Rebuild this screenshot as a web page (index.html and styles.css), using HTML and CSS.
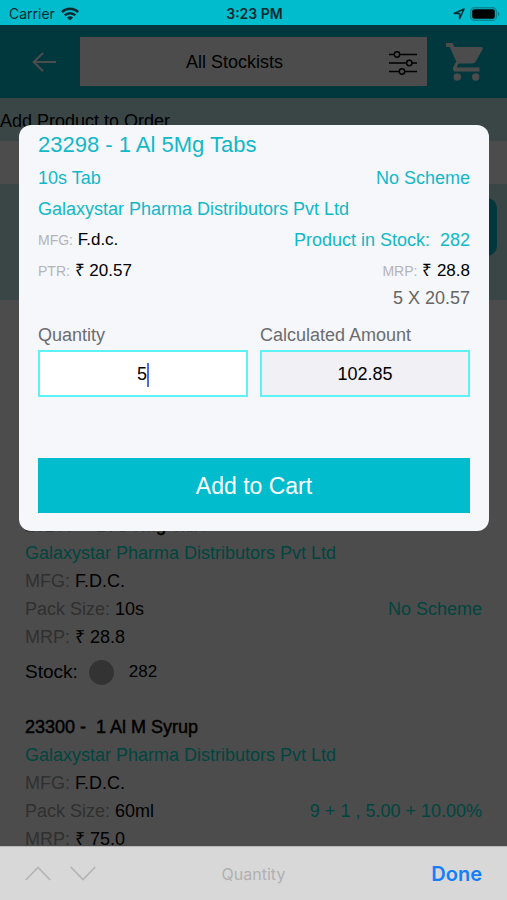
FILE: index.html
```html
<!DOCTYPE html>
<html lang="en">
<head>
<meta charset="utf-8">
<meta name="viewport" content="width=device-width, initial-scale=1">
<title>Add Product to Order</title>
<link rel="stylesheet" href="styles.css">
</head>
<body>
<div class="screen">
  <div class="status">
    <div class="status-left">
      <span>Carrier</span>
      <svg class="wifi" viewBox="0 0 18 14" width="18" height="14" fill="none" stroke="#062b30" stroke-width="2.6"><path d="M.9 5.2a11.400 11.400 0 0 1 16.200 0"/><path d="M3.8 8.400a7.300 7.300 0 0 1 10.400 0"/><path d="M9 13.600 5.900 10.600a4.400 4.400 0 0 1 6.200 0z" fill="#062b30" stroke="none"/></svg>
    </div>
    <span class="time">3:23 PM</span>
    <div class="status-right">
      <svg viewBox="0 0 12 12" width="12" height="12" fill="none" stroke="#062b30" stroke-width="1.5" stroke-linejoin="round"><path d="M11 1 1.200 5.400h5.400v5.400z"/></svg>
      <svg viewBox="0 0 30 14" width="30" height="14"><rect x=".7" y=".7" width="25.600" height="12.600" rx="3.600" fill="none" stroke="#068894" stroke-width="1.400"/><rect x="2.200" y="2.200" width="22.600" height="9.600" rx="2" fill="#000"/><path d="M27.600 4.600q2 .8 2 2.400t-2 2.400z" fill="#068894"/></svg>
    </div>
  </div>

  <main class="app">
    <header class="bar">
      <button class="icon-btn back" aria-label="Back"><svg viewBox="0 0 24 20" width="24" height="20" fill="none" stroke="#fff" stroke-width="2"><path d="M24 10H2M11 1 1.600 10l9.400 9"/></svg></button>
      <button class="picker"><span>All Stockists</span>
        <svg viewBox="0 0 28 24" width="28" height="24" fill="none" stroke="#000" stroke-width="1.500"><path d="M0 3.500h5M11 3.500h17M0 12h17.500M23 12h5M0 20.500h10M16 20.500h12"/><circle cx="8" cy="3.500" r="2.700"/><circle cx="20.300" cy="12" r="2.700"/><circle cx="13" cy="20.500" r="2.700"/></svg>
      </button>
      <button class="icon-btn cart" aria-label="Cart"><svg viewBox="0 0 37 38" width="37" height="38" fill="#fff"><path d="M0 0h6.500l2 4h26.500q2.400 0 1.500 2.400l-6.800 12.200q-1.200 2-3.500 2H12.600l-1.600 3q-.5 1 .6 1H33.500v4H10.500q-4.600 0-3.200-4.600l3-5.600L3.800 4H0z"/><circle cx="11.300" cy="34" r="3.700"/><circle cx="29.700" cy="34" r="3.700"/></svg></button>
    </header>
    <h1 class="strip">Add Product to Order</h1>
    <div class="gap"></div>
    <div class="search"><div class="search-block"></div></div>
    <section class="list">
      <article class="item first">
        <h2>23298 -&nbsp; 1 Al 5Mg Tabs</h2>
        <p class="seller">Galaxystar Pharma Distributors Pvt Ltd</p>
        <p><span class="key">MFG:</span> F.D.C.</p>
        <p class="split"><span><span class="key">Pack Size:</span> 10s</span><span class="offer">No Scheme</span></p>
        <p><span class="key">MRP:</span> ₹ 28.8</p>
        <div class="stock"><span class="stock-label">Stock:</span><span class="dot"></span><span>282</span></div>
      </article>
      <article class="item">
        <h2>23300 -&nbsp; 1 Al M Syrup</h2>
        <p class="seller">Galaxystar Pharma Distributors Pvt Ltd</p>
        <p><span class="key">MFG:</span> F.D.C.</p>
        <p class="split"><span><span class="key">Pack Size:</span> 60ml</span><span class="offer">9 + 1 , 5.00 + 10.00%</span></p>
        <p><span class="key">MRP:</span> ₹ 75.0</p>
      </article>
    </section>

    <div class="overlay">
      <form class="modal" role="dialog" aria-labelledby="product">
        <h2 class="product" id="product">23298 - 1 Al 5Mg Tabs</h2>
        <div class="row accent"><span>10s Tab</span><span>No Scheme</span></div>
        <div class="row accent"><span>Galaxystar Pharma Distributors Pvt Ltd</span></div>
        <div class="row"><span class="value"><span class="tag">MFG:</span> F.d.c.</span><span class="accent">Product in Stock:&nbsp; 282</span></div>
        <div class="row"><span class="value"><span class="tag">PTR:</span> ₹ 20.57</span><span class="value"><span class="tag">MRP:</span> ₹ 28.8</span></div>
        <div class="sum">5 X 20.57</div>
        <div class="fields">
          <div class="field"><label for="qty">Quantity</label>
            <div class="entry"><input id="qty" type="text" inputmode="numeric" value="5" size="1"><span class="caret"></span></div></div>
          <div class="field"><label for="amount">Calculated Amount</label>
            <div class="entry readonly"><input id="amount" type="text" value="102.85" size="6" readonly></div></div>
        </div>
        <button class="submit" type="button">Add to Cart</button>
      </form>
    </div>
  </main>

  <footer class="keys">
    <div class="arrows">
      <button class="icon-btn" aria-label="Previous field"><svg viewBox="0 0 26 15" width="26" height="15" fill="none" stroke="#b4b4b4" stroke-width="1.700"><path d="M.8 14 13 1.500 25.200 14"/></svg></button>
      <button class="icon-btn" aria-label="Next field"><svg viewBox="0 0 26 15" width="26" height="15" fill="none" stroke="#b4b4b4" stroke-width="1.700"><path d="M.8 1 13 13.500 25.200 1"/></svg></button>
    </div>
    <span class="hint">Quantity</span>
    <button class="done">Done</button>
  </footer>
</div>
</body>
</html>
```

FILE: styles.css
```css
* { box-sizing: border-box; }
body {
  margin: 0;
  background: #fff;
  color: #000;
  font-family: "Liberation Sans", Arial, sans-serif;
  font-size: 18px;
}
h1, h2, p { margin: 0; }
button, input { font: inherit; color: inherit; border: 0; padding: 0; margin: 0; background: none; }
svg { display: block; flex: none; }
.screen { height: 100vh; display: flex; flex-direction: column; overflow: hidden; }

.status {
  flex: none;
  height: 25px;
  padding: 2px 7px 0 9px;
  display: grid;
  grid-template-columns: 1fr auto 1fr;
  align-items: center;
  background: #00bccd;
  color: #062b30;
  font-family: Inter, Roboto, sans-serif;
  font-size: 14px;
}
.status-left { display: flex; align-items: center; gap: 6px; }
.status-right { display: flex; align-items: center; justify-content: flex-end; gap: 5px; }
.time { font-weight: 600; }

.app { position: relative; flex: 1; min-height: 0; overflow: hidden; }
.bar {
  height: 73px;
  padding: 0 24px 0 32px;
  display: flex;
  align-items: center;
  background: #00bccd;
}
.icon-btn { display: block; flex: none; }
.back { margin-right: 24px; }
.picker {
  flex: 1;
  height: 49px;
  padding: 2px 10px 0 0;
  display: flex;
  align-items: center;
  background: #fff;
}
.picker span { flex: 1; text-align: center; }
.cart { margin-left: 19px; }
.strip { height: 43px; padding-top: 12px; background: #c4e8ea; font-size: 18px; line-height: 22px; font-weight: 500; }
.gap { height: 43px; }
.search { height: 116px; padding: 14px 10px 0 24px; background: #c4e8ea; }
.search-block { height: 58px; border-radius: 10px; background: #00bccd; }

.list { padding: 211px 25px 0; }
.item { line-height: 28px; }
.item h2 { font-size: 18px; line-height: 28px; font-weight: 500; -webkit-text-stroke: 0.5px #000; }
.item + .item { margin-top: 22px; }
.key { color: #a0a0a0; }
.seller, .offer { color: #00e8d4; }
.split, .row { display: flex; justify-content: space-between; }
.stock { height: 38px; display: flex; align-items: center; margin-top: 2px; font-size: 17px; }
.stock-label { font-size: 19px; }
.dot { width: 25px; height: 25px; margin: 0 15px 0 11px; border-radius: 50%; background: #aaa; }

.overlay { position: absolute; inset: 0; padding: 100px 18px 0 19px; background: rgba(0, 0, 0, 0.7); }
.modal { padding: 4px 19px 18px; border-radius: 12px; background: #f5f7fa; }
.product { margin-bottom: 2px; font-size: 22px; line-height: 32px; font-weight: 400; color: #12b8c8; }
.row { height: 31px; line-height: 31px; }
.accent { color: #12b8c8; }
.value { font-size: 17px; line-height: 30px; }
.tag { color: #b4b4b8; font-size: 14px; }
.sum { line-height: 22px; text-align: right; color: #666; }
.fields { display: grid; grid-template-columns: 1fr 1fr; gap: 12px; margin-top: 14px; }
.field label { display: block; line-height: 24px; margin-bottom: 3px; color: #6c6c70; }
.entry {
  height: 47px;
  padding-top: 2px;
  display: flex;
  align-items: center;
  justify-content: center;
  border: 2px solid #5cf3f6;
  background: #fff;
}
.readonly { background: #f1f0f5; }
.entry input { outline: 0; text-align: center; height: 40px; }
#qty { width: 10px; }
#amount { width: 100%; }
.caret { width: 2px; height: 24px; background: #4a6ee0; }
.submit {
  display: block;
  width: 100%;
  height: 55px;
  margin-top: 61px;
  padding-top: 2px;
  background: #00bccd;
  color: #fff;
  font-size: 23px;
}

.keys {
  flex: none;
  height: 54px;
  padding: 0 25px;
  display: grid;
  grid-template-columns: 1fr auto 1fr;
  align-items: center;
  background: #d8d8d8;
  border-top: 1px solid #b8b8b8;
}
.arrows { display: flex; gap: 19px; }
.hint { color: #b0b0b0; font-family: Inter, Roboto, sans-serif; font-size: 16px; }
.done { justify-self: end; color: #147efb; font-family: Inter, Roboto, sans-serif; font-size: 20px; font-weight: 600; }
```
